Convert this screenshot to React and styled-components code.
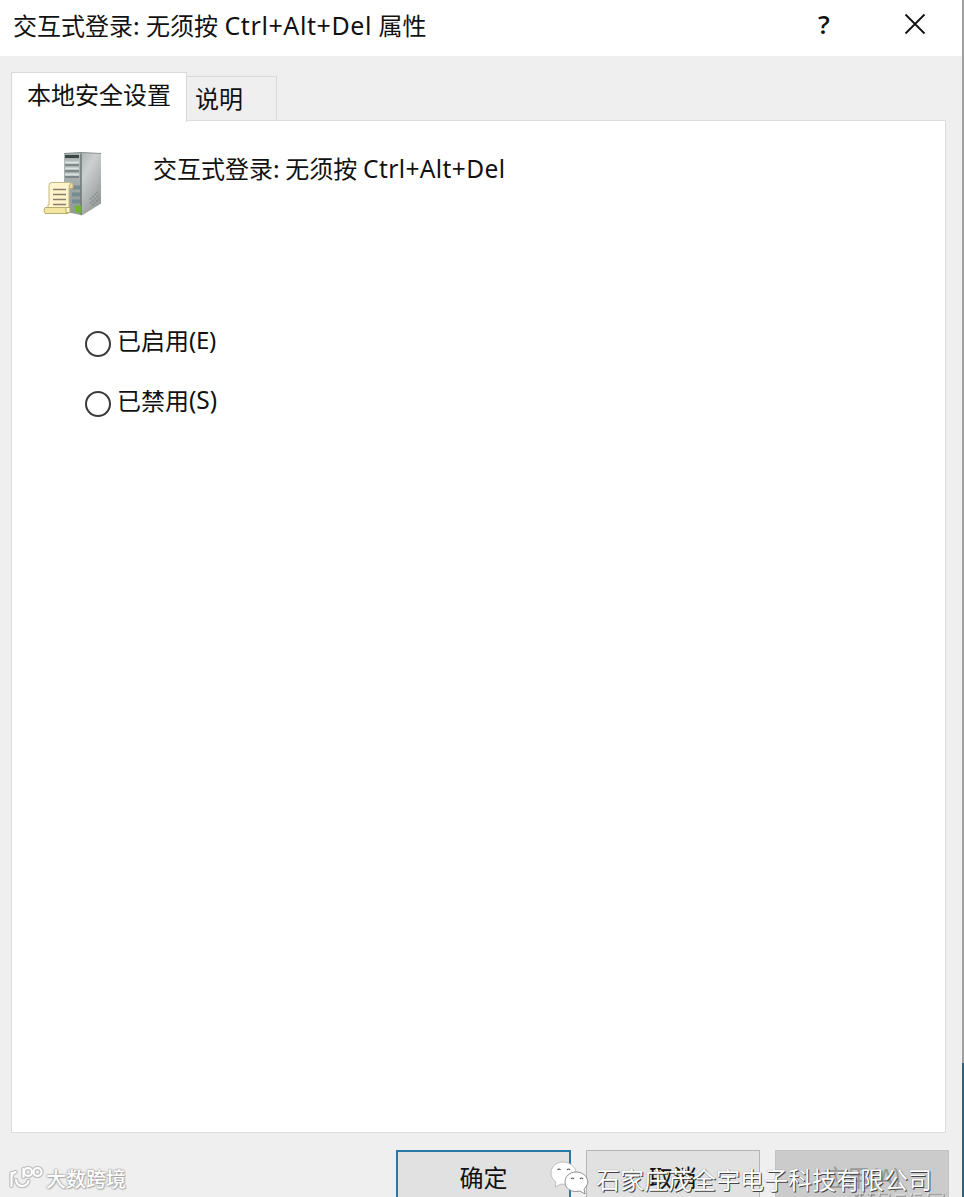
import styled, { createGlobalStyle } from "styled-components";

const App = () => {
    return (
        <>
            <GlobalStyle />
            <Screen>
                <Dialog>
                    <TitleBar>
                        <Title>交互式登录: 无须按 <Latin $size={25} $spacing={0.6}>Ctrl+Alt+Del</Latin> 属性</Title>
                        <HelpButton>?</HelpButton>
                        <CloseButton aria-label="Close">
                            <svg width="22" height="22" viewBox="0 0 22 22">
                                <path d="M1.500 1.500 20.500 20.500M20.500 1.500 1.500 20.500" stroke="#111" strokeWidth="1.8" fill="none" />
                            </svg>
                        </CloseButton>
                    </TitleBar>
                    <Tabs>
                        <Tab $active>本地安全设置</Tab>
                        <Tab>说明</Tab>
                    </Tabs>
                    <Panel>
                        <Heading>
                            <ServerIcon />
                            <PolicyName>交互式登录: 无须按 <Latin $size={24.5} $spacing={0.4}>Ctrl+Alt+Del</Latin></PolicyName>
                        </Heading>
                        <Options>
                            <Option><Radio />已启用<Latin $size={24} $spacing={-0.3}>(E)</Latin></Option>
                            <Option><Radio />已禁用<Latin $size={24.5} $spacing={0}>(S)</Latin></Option>
                        </Options>
                    </Panel>
                    <Footer>
                        <Button $primary>确定</Button>
                        <Button>取消</Button>
                        <Button $disabled>应用(A)</Button>
                    </Footer>
                </Dialog>
                <Edge>
                    <EdgeLine />
                    <EdgeAccent />
                </Edge>
                <SiteMark>
                    <SiteLogo />
                    <span>大数跨境</span>
                </SiteMark>
                <AccountMark>
                    <ChatLogo />
                    <span>石家庄茂全宇电子科技有限公司</span>
                </AccountMark>
                <ClippedMark width="98" height="4" viewBox="0 0 98 4">
                    <path d="M3 3H6M9 1V4M6 2H12M19 1V4M16 2H23M28 4V1H38V4M44 3H54M60 1V4M63 2H70M77 4V1H92V4" stroke="#777" fill="none" />
                    <path d="M8 0V3M18 0V3M27 3V0H37V3M43 2H53M59 0V3M62 1H69M76 3V0H91V3" stroke="#eee" fill="none" />
                </ClippedMark>
            </Screen>
        </>
    )
}

export default App;

const ServerIcon = () => (
    <svg width="60" height="66" viewBox="0 -0.5 60 66">
        <defs>
            <linearGradient id="side" x1="0" y1="0" x2="1" y2="1">
                <stop offset="0" stopColor="#8e9494" />
                <stop offset="0.45" stopColor="#cdd0d0" />
                <stop offset="1" stopColor="#858b8b" />
            </linearGradient>
            <linearGradient id="front" x1="0" y1="0" x2="0" y2="1">
                <stop offset="0" stopColor="#b5bcbc" />
                <stop offset="1" stopColor="#8f9898" />
            </linearGradient>
        </defs>
        <path d="M21 2 38 1 58 2V52L39 64 21 60Z" fill="url(#side)" />
        <path d="M21 2H38V63L21 60Z" fill="url(#front)" />
        <path d="M38 2V63" stroke="#687171" strokeWidth="1.4" />
        <path d="M21 2 38 1 58 2" stroke="#879090" fill="none" />
        <path d="M22 5H36" stroke="#3d4646" strokeWidth="3.2" />
        <path d="M22 11H36M22 17H36M22 23H36" stroke="#dce1e1" strokeWidth="2" />
        <path d="M22 13.500H36M22 19.500H36M22 25.500H36" stroke="#707a7a" strokeWidth="1.5" />
        <path d="M29 36H37M29 43H37M29 50H37" stroke="#768b92" strokeWidth="4" />
        <path d="M32 54H38V62L32 60Z" fill="#72b52c" />
        <path d="M47 48 55 40M47 52 56 43M49 54 56 47" stroke="#858c8c" strokeWidth="1.3" strokeDasharray="2 1" />
        <path d="M6 34Q6 31 9 31H28Q26 33 26 36V59H5V53H6Z" fill="#fff4cb" stroke="#c4b987" />
        <path d="M28 31Q31 32 30 37H26" fill="#e9d99c" stroke="#b6aa70" />
        <path d="M10 38H23M10 43H23M10 48H23M10 53H23" stroke="#897e68" strokeWidth="1.6" />
        <path d="M2 56H25V62H2Q0 59 2 56Z" fill="#f3e5a2" stroke="#b9ac70" />
        <path d="M23 56H27V61H23Z" fill="#fff6c9" stroke="#b9ac70" />
    </svg>
)

const logoPath = "M3.500 9V22M3.500 13Q4 9 7.500 8M8 16Q9 22 14 22 19 22 20.500 17M15.500 5V13"

const SiteLogo = () => (
    <svg width="36" height="26" viewBox="0 0 36 26">
        <g fill="none" stroke="#c3c3c3" strokeWidth="4.6" strokeLinecap="round">
            <path d={logoPath} />
            <circle cx="20" cy="8" r="4" />
            <circle cx="29.500" cy="8" r="4" />
        </g>
        <g fill="none" stroke="#fff" strokeWidth="2" strokeLinecap="round">
            <path d={logoPath} />
            <circle cx="20" cy="8" r="4" />
            <circle cx="29.500" cy="8" r="4" />
        </g>
    </svg>
)

const ChatLogo = () => (
    <svg width="39" height="34" viewBox="0 0 39 34">
        <path d="M13 1C6 1 1 6 1 12 1 16 3 19 6 21L5 26 11 23C20 25 26 19 26 12 26 6 20 1 13 1Z" fill="#fff" stroke="#aaa" strokeWidth="0.7" />
        <path d="M26 11C19 11 15 16 15 21 15 28 22 32 30 30L35 33 34 28C42 21 36 11 26 11Z" fill="#fff" stroke="#777" strokeWidth="0.8" />
        <path d="M7.500 9Q9 7 10.500 9M17 9Q18.500 7 20 9M21 18Q22.500 16 24 18M30 18Q31.500 16 33 18" fill="none" stroke="#555" strokeWidth="1.2" />
    </svg>
)

const GlobalStyle = createGlobalStyle`
    *{
        box-sizing:border-box;
    }

    body{
        margin:0;
        background:#efefef;
        overflow:hidden;
    }
`

const Screen = styled.div`
    position:relative;
    display:flex;
    width:964px;
    height:1197px;
    overflow:hidden;
    color:#111;
    font-family:"Noto Sans CJK SC", sans-serif;
    font-weight:400;
    font-size:24px;
    line-height:36px;
    white-space:nowrap;
`

const Dialog = styled.div`
    display:flex;
    flex-direction:column;
    width:962px;
    background:#efefef;
`

const Latin = styled.span`
    font-family:"Noto Sans", "Open Sans", sans-serif;
    font-size:${({ $size }) => $size}px;
    letter-spacing:${({ $spacing }) => $spacing}px;
    line-height:1;
`

const TitleBar = styled.header`
    display:flex;
    height:56px;
    padding-left:13px;
    background:#fff;
`

const Title = styled.div`
    width:796px;
    padding-top:7px;
    word-spacing:1px;
`

const HelpButton = styled.button`
    width:30px;
    padding:0 0 9px;
    border:0;
    background:none;
    font-family:"Open Sans", sans-serif;
    font-size:26px;
    font-weight:600;
    color:#111;
`

const CloseButton = styled.button`
    display:flex;
    margin-left:65px;
    padding:13px 0 0;
    border:0;
    background:none;
`

const Tabs = styled.div`
    display:flex;
    align-items:flex-end;
    height:64px;
    padding-left:11px;
`

const Tab = styled.div`
    width:${({ $active }) => $active ? "176px" : "90px"};
    height:${({ $active }) => $active ? "50px" : "44px"};
    margin-bottom:${({ $active }) => $active ? "-2px" : "0"};
    padding:${({ $active }) => $active ? "3px 0 0 15px" : "3px 0 0 8px"};
    border:1px solid #d9d9d9;
    border-bottom:0;
    border-left-width:${({ $active }) => $active ? "1px" : "0"};
    background:${({ $active }) => $active ? "#fff" : "#efefef"};
    z-index:${({ $active }) => $active ? 1 : 0};
`

const Panel = styled.main`
    width:935px;
    height:1013px;
    margin-left:11px;
    padding:30px 31px;
    border:1px solid #dcdcdc;
    background:#fff;
`

const Heading = styled.div`
    display:flex;
    height:66px;
`

const PolicyName = styled.div`
    margin:-1px 0 0 50px;
    word-spacing:0.3px;
`

const Options = styled.div`
    display:flex;
    flex-direction:column;
    gap:24px;
    padding:105px 0 0 42px;
`

const Option = styled.label`
    display:flex;
    align-items:center;
    height:36px;
`

const Radio = styled.span`
    width:26px;
    height:26px;
    margin:7px 6px 0 0;
    border:2px solid #3a3a3a;
    border-radius:50%;
`

const Footer = styled.footer`
    display:flex;
    gap:15px;
    height:64px;
    padding:17px 0 0 396px;
`

const Button = styled.button`
    flex:none;
    width:${({ $primary }) => $primary ? "175px" : "174px"};
    height:60px;
    padding:0 0 7px;
    border:${({ $primary }) => $primary ? "2px solid #2878a8" : "1px solid #b5b5b5"};
    border-color:${({ $disabled }) => $disabled && "#c3c3c3"};
    background:${({ $disabled }) => $disabled ? "#cbcbcb" : "#e1e1e1"};
    color:${({ $disabled }) => $disabled ? "#999" : "#111"};
    font-family:inherit;
    font-size:24px;
    font-weight:inherit;
`

const Edge = styled.div`
    display:flex;
    flex-direction:column;
    width:2px;
`

const EdgeLine = styled.div`
    height:1063px;
    background:#a0a0a0;
`

const EdgeAccent = styled.div`
    flex:1;
    background:#2d637e;
`

const SiteMark = styled.div`
    position:absolute;
    left:8px;
    top:1164px;
    display:flex;
    gap:2px;
    color:#fff;
    font-size:20px;
    font-weight:500;
    line-height:29px;
    text-shadow:0 0 2px #999, 0 0 2px #999, 1px 1px 1px #bbb;
`

const AccountMark = styled.div`
    position:absolute;
    left:550px;
    top:1161px;
    display:flex;
    gap:7px;
    color:#fff;
    text-shadow:1px 1px 0 #444, 0 0 1px #777;
`

/* tops of the second watermark line, cut by the window's bottom */
const ClippedMark = styled.svg`
    position:absolute;
    left:852px;
    bottom:0;
`
